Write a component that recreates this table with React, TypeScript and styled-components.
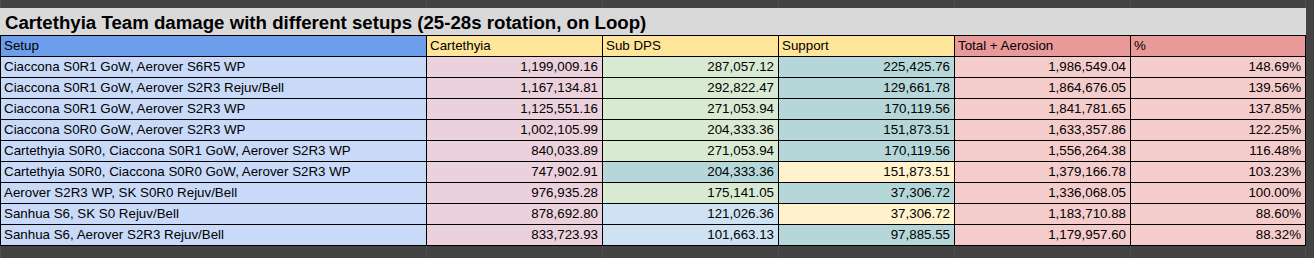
import React from 'react'
import styled, { createGlobalStyle } from 'styled-components'

const GlobalStyle = createGlobalStyle`
    body {
        margin: 0;
        background: #434343;
        font-family: "Liberation Sans", Arial, sans-serif;
    }
`

const COLS = '425px 175px 175px 175px 175px 174px'

const Page = styled.div`
    width: 1314px;
    height: 258px;
    background: #434343;
    overflow: hidden;
`

// empty sheet area above / below the table, with faint gridlines
const Strip = styled.div<{ $h: number }>`
    display: grid;
    grid-template-columns: ${COLS};
    column-gap: 1px;
    padding: 0 1px;
    width: 1306px;
    box-sizing: border-box;
    height: ${(p) => p.$h}px;
    background: #505050;
`

const StripCell = styled.div`
    background: #434343;
`

const Title = styled.div`
    width: 1306px;
    height: 27px;
    box-sizing: border-box;
    padding: 2px 0 0 5px;
    background: #d9d9d9;
    color: #000;
    font-size: 18.67px;
    font-weight: 700;
    line-height: 25px;
    white-space: nowrap;
`

const Sheet = styled.div`
    display: grid;
    grid-template-columns: ${COLS};
    grid-auto-rows: 20px;
    gap: 1px;
    padding: 1px;
    width: 1306px;
    box-sizing: border-box;
    background: #000;
`

const Cell = styled.div<{ $bg: string; $right?: boolean }>`
    background: ${(p) => p.$bg};
    color: #000;
    font-size: 13.33px;
    line-height: 20px;
    padding: 0 4px 0 3px;
    text-align: ${(p) => (p.$right ? 'right' : 'left')};
    white-space: nowrap;
    overflow: hidden;
`

const C = {
    setupHead: '#6d9eeb',
    setup: '#c9daf8',
    yellowHead: '#ffe599',
    pink: '#ead1dc',
    green: '#d9ead3',
    teal: '#b6d7d9',
    blue: '#cfe2f3',
    yellow: '#fff2cc',
    redHead: '#ea9999',
    red: '#f4cccc',
}

type Row = {
    setup: string
    carte: string
    sub: string
    support: string
    total: string
    pct: string
    subBg: string
    supBg: string
}

const ROWS: Row[] = [
    { setup: 'Ciaccona S0R1 GoW, Aerover S6R5 WP', carte: '1,199,009.16', sub: '287,057.12', support: '225,425.76', total: '1,986,549.04', pct: '148.69%', subBg: C.green, supBg: C.teal },
    { setup: 'Ciaccona S0R1 GoW, Aerover S2R3 Rejuv/Bell', carte: '1,167,134.81', sub: '292,822.47', support: '129,661.78', total: '1,864,676.05', pct: '139.56%', subBg: C.green, supBg: C.teal },
    { setup: 'Ciaccona S0R1 GoW, Aerover S2R3 WP', carte: '1,125,551.16', sub: '271,053.94', support: '170,119.56', total: '1,841,781.65', pct: '137.85%', subBg: C.green, supBg: C.teal },
    { setup: 'Ciaccona S0R0 GoW, Aerover S2R3 WP', carte: '1,002,105.99', sub: '204,333.36', support: '151,873.51', total: '1,633,357.86', pct: '122.25%', subBg: C.green, supBg: C.teal },
    { setup: 'Cartethyia S0R0, Ciaccona S0R1 GoW, Aerover S2R3 WP', carte: '840,033.89', sub: '271,053.94', support: '170,119.56', total: '1,556,264.38', pct: '116.48%', subBg: C.green, supBg: C.teal },
    { setup: 'Cartethyia S0R0, Ciaccona S0R0 GoW, Aerover S2R3 WP', carte: '747,902.91', sub: '204,333.36', support: '151,873.51', total: '1,379,166.78', pct: '103.23%', subBg: C.teal, supBg: C.yellow },
    { setup: 'Aerover S2R3 WP, SK S0R0 Rejuv/Bell', carte: '976,935.28', sub: '175,141.05', support: '37,306.72', total: '1,336,068.05', pct: '100.00%', subBg: C.green, supBg: C.teal },
    { setup: 'Sanhua S6, SK S0 Rejuv/Bell', carte: '878,692.80', sub: '121,026.36', support: '37,306.72', total: '1,183,710.88', pct: '88.60%', subBg: C.blue, supBg: C.yellow },
    { setup: 'Sanhua S6, Aerover S2R3 Rejuv/Bell', carte: '833,723.93', sub: '101,663.13', support: '97,885.55', total: '1,179,957.60', pct: '88.32%', subBg: C.blue, supBg: C.teal },
]

const HEADERS: [string, string][] = [
    ['Setup', C.setupHead],
    ['Cartethyia', C.yellowHead],
    ['Sub DPS', C.yellowHead],
    ['Support', C.yellowHead],
    ['Total + Aerosion', C.redHead],
    ['%', C.redHead],
]

const EmptyStrip: React.FC<{ h: number }> = ({ h }) => (
    <Strip $h={h}>
        {HEADERS.map((_, i) => <StripCell key={i} />)}
    </Strip>
)

const App: React.FC = () => {
    return <Page>
        <GlobalStyle />
        <EmptyStrip h={8} />

        <Title>Cartethyia Team damage with different setups (25-28s rotation, on Loop)</Title>

        <Sheet>
            {HEADERS.map(([label, bg]) => (
                <Cell key={label} $bg={bg}>{label}</Cell>
            ))}

            {ROWS.map((r, i) => (
                <React.Fragment key={i}>
                    <Cell $bg={C.setup}>{r.setup}</Cell>
                    <Cell $bg={C.pink} $right>{r.carte}</Cell>
                    <Cell $bg={r.subBg} $right>{r.sub}</Cell>
                    <Cell $bg={r.supBg} $right>{r.support}</Cell>
                    <Cell $bg={C.red} $right>{r.total}</Cell>
                    <Cell $bg={C.red} $right>{r.pct}</Cell>
                </React.Fragment>
            ))}
        </Sheet>

        <EmptyStrip h={20} />
    </Page>
}

export default App
